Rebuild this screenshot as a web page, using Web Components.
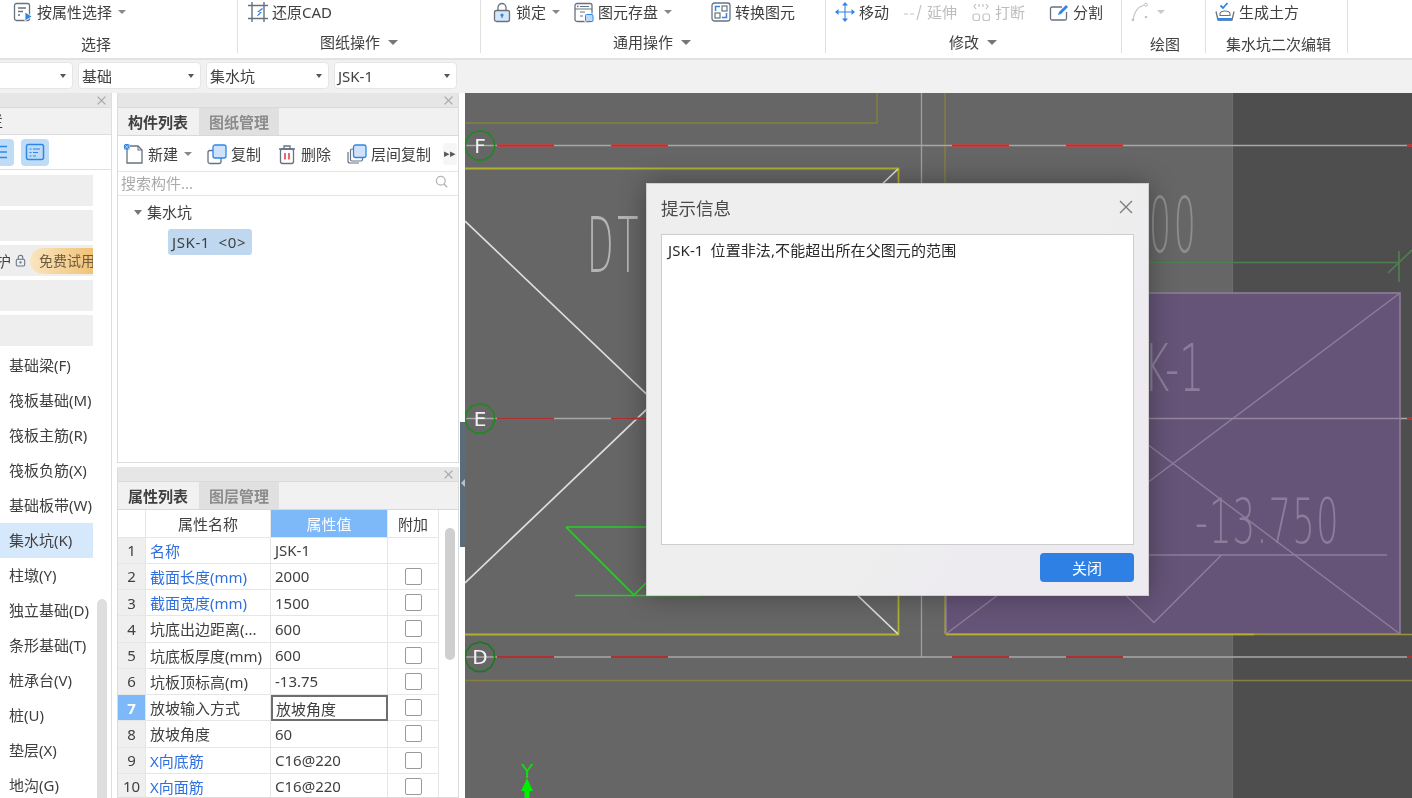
<!DOCTYPE html>
<html lang="zh-CN">
<head>
<meta charset="utf-8">
<title>集水坑</title>
<style>
    html, body { margin: 0; height: 100%; overflow: hidden; background: #fff; }
    body { font: 15px "Noto Sans", "Noto Sans CJK SC", sans-serif; color: #404040; }
</style>
</head>
<body>
<gcl-app>
    <gcl-ribbon slot="ribbon">
        <gcl-group label="选择" style="--w:238px;--pad:13px;--lx:81px">
            <gcl-tool icon="attr" arrow>按属性选择</gcl-tool>
        </gcl-group>
        <gcl-group label="图纸操作" arrow style="--w:243px;--pad:10px;--lx:82px">
            <gcl-tool icon="cad">还原CAD</gcl-tool>
        </gcl-group>
        <gcl-group label="通用操作" arrow style="--w:345px;--pad:11px;--lx:132px">
            <gcl-tool icon="lock" arrow>锁定</gcl-tool>
            <gcl-tool icon="save" arrow style="margin-left:14px">图元存盘</gcl-tool>
            <gcl-tool icon="convert" style="margin-left:39px">转换图元</gcl-tool>
        </gcl-group>
        <gcl-group label="修改" arrow style="--w:296px;--pad:9px;--lx:123px">
            <gcl-tool icon="move">移动</gcl-tool>
            <gcl-tool icon="extend" off style="margin-left:14px">延伸</gcl-tool>
            <gcl-tool icon="break" off style="margin-left:14px">打断</gcl-tool>
            <gcl-tool icon="split" style="margin-left:24px">分割</gcl-tool>
        </gcl-group>
        <gcl-group label="绘图" style="--w:84px;--pad:9px;--lx:28px">
            <gcl-tool icon="arc" arrow off></gcl-tool>
        </gcl-group>
        <gcl-group label="集水坑二次编辑" style="--w:142px;--pad:9px;--lx:20px">
            <gcl-tool icon="earth">生成土方</gcl-tool>
        </gcl-group>
    </gcl-ribbon>

    <gcl-combobar slot="combos">
        <gcl-combo></gcl-combo>
        <gcl-combo>基础</gcl-combo>
        <gcl-combo>集水坑</gcl-combo>
        <gcl-combo>JSK-1</gcl-combo>
    </gcl-combobar>

    <gcl-nav slot="nav"></gcl-nav>

    <gcl-stack slot="side">
        <gcl-panel tab1="构件列表" tab2="图纸管理" style="height:370px">
            <gcl-components></gcl-components>
        </gcl-panel>
        <gcl-panel tab1="属性列表" tab2="图层管理" style="flex:1">
            <gcl-props></gcl-props>
        </gcl-panel>
    </gcl-stack>

    <gcl-canvas slot="canvas"></gcl-canvas>

    <gcl-dialog slot="overlay" heading="提示信息" action="关闭">JSK-1 位置非法,不能超出所在父图元的范围</gcl-dialog>
</gcl-app>

<script>
    const G = '#667280';
    const B = '#2e86e8';
    const L = '#c4c4c4';
    const ICONS = {
        attr: `<rect x="1.5" y="1.5" width="15" height="17" rx="2" fill="none" stroke="${G}" stroke-width="1.3"/><path d="M5 6h8M5 9.5h5M5 13h2" stroke="${G}" stroke-width="1.3"/><path d="M12 10l7 4.5-7 4.5z" fill="${B}" stroke="#fff" stroke-width=".8"/>`,
        cad: `<path d="M4 0v20M16 0v20M0 3.5h20M0 16.5h20" stroke="${G}" stroke-width="1.4" fill="none"/><path d="M14 6l-5 4h3l-3 3.5 1 .5 4-4h-3l4-3z" fill="${B}"/>`,
        lock: `<path d="M6 9V5.5a4 4 0 0 1 8 0V9" fill="none" stroke="${G}" stroke-width="1.3"/><rect x="2.5" y="8.5" width="15" height="11" rx="2" fill="#d5e6f9" stroke="${G}" stroke-width="1.3"/><circle cx="10" cy="13" r="1.6" fill="${B}"/><path d="M10 13v3" stroke="${B}" stroke-width="1.3"/>`,
        save: `<rect x="1" y="1.5" width="17" height="18" rx="2" fill="none" stroke="${G}" stroke-width="1.3"/><path d="M1 7h17M6 4.5h9M6 10h5M6 14h3" stroke="${G}" stroke-width="1.1"/><circle cx="3.8" cy="4.3" r=".9" fill="${G}"/><rect x="10.5" y="11.5" width="9" height="8.5" fill="#fff"/><rect x="11.5" y="12.5" width="7.5" height="7" rx="1" fill="#bcd9f8" stroke="${B}"/>`,
        convert: `<rect x="1" y="1" width="18" height="18" rx="2.5" fill="none" stroke="${G}" stroke-width="1.3"/><rect x="11" y="4" width="5" height="5" fill="none" stroke="${G}" stroke-width="1.2"/><rect x="4" y="11" width="5" height="5" fill="none" stroke="${G}" stroke-width="1.2"/><path d="M9 4.5H4.5V9M11 15.5h4.5V11" fill="none" stroke="${B}" stroke-width="1.5"/>`,
        move: `<path d="M10 1v18M1 10h18" stroke="${B}" stroke-width="1.1"/><path d="M10 0l3 3.5H7zM10 20l3-3.5H7zM0 10l3.5-3v6zM20 10l-3.5-3v6z" fill="${B}"/>`,
        extend: `<path d="M1 12h4M7 12h4M18 3l-4 15" stroke="${L}" stroke-width="1.2" fill="none"/>`,
        break: `<rect x="2" y="12" width="6.5" height="6.5" rx="2" fill="none" stroke="${L}" stroke-width="1.2"/><rect x="12" y="12" width="6.5" height="6.5" rx="2" fill="none" stroke="${L}" stroke-width="1.2"/><path d="M5 2L3 4.5 5 7M15 2l2 2.5L15 7M8 2v3M12 2v3" fill="none" stroke="${L}" stroke-width="1.2"/>`,
        split: `<path d="M13 5H3a1.500 1.500 0 0 0-1.500 1.500v10A1.500 1.500 0 0 0 3 18h13a1.500 1.500 0 0 0 1.500-1.500V10" fill="none" stroke="${G}" stroke-width="1.3"/><path d="M9 13l1-3 7-7 2 2-7 7z" fill="${B}"/>`,
        arc: `<path d="M2 18C3 10 7 5 13 3" fill="none" stroke="${L}" stroke-width="1.3"/><circle cx="15" cy="2.8" r="1.5" fill="none" stroke="${L}"/><circle cx="2" cy="18" r="1.3" fill="${L}"/><circle cx="15" cy="15" r="1.3" fill="${L}"/>`,
        earth: `<path d="M1 9.5l2 8.500h14l2-8.500" fill="none" stroke="${G}" stroke-width="1.3"/><path d="M5 11.5c.5-2 2-2.500 5-2.500s4.500.5 5 2.500v2H5z" fill="none" stroke="${G}" stroke-width="1.1"/><path d="M3 16h14v2.500H3z" fill="${B}"/><path d="M5.5 3.5L8 6l4.500-5" fill="none" stroke="${B}" stroke-width="1.8"/>`,
        add: `<path d="M3 5v14h15V6l-4-4H6" fill="none" stroke="${G}" stroke-width="1.3"/><path d="M14 2v4h4" fill="none" stroke="${G}" stroke-width="1.1"/><rect x="0" y="0" width="5.5" height="5.5" fill="${B}"/><path d="M0 0l5.500 5.500M5.500 0L0 5.500" stroke="#fff" stroke-width=".6"/>`,
        copy: `<rect x="1" y="6.5" width="13" height="13" rx="2" fill="none" stroke="${G}" stroke-width="1.3"/><rect x="6" y="1" width="13" height="13" rx="2" fill="#cfe2fa" stroke="${B}" stroke-width="1.3"/>`,
        trash: `<path d="M2 5h16M7 5V2h6v3" fill="none" stroke="${G}" stroke-width="1.3"/><rect x="3.5" y="5" width="13" height="14.5" rx="2" fill="none" stroke="${G}" stroke-width="1.3"/><path d="M8 9v6.500M12 9v6.500" stroke="#e4393c" stroke-width="1.5"/>`,
        layer: `<path d="M1 8v9a2 2 0 0 0 2 2h9" fill="none" stroke="${G}" stroke-width="1.2"/><rect x="3.5" y="5" width="12" height="12" rx="1.5" fill="#fff" stroke="${G}" stroke-width="1.2"/><rect x="6.5" y="1" width="12.5" height="12.5" rx="2" fill="#cfe2fa" stroke="${B}" stroke-width="1.3"/>`,
        search: `<circle cx="8.5" cy="8.5" r="5.5" fill="none" stroke="#b5b5b5" stroke-width="1.6"/><path d="M12.5 12.500l4 4" stroke="#b5b5b5" stroke-width="1.8"/>`,
        padlock: `<path d="M6.5 8V5.500a3.500 3.500 0 0 1 7 0V8" fill="none" stroke="${G}" stroke-width="1.6"/><rect x="3.5" y="8" width="13" height="10.5" rx="2" fill="none" stroke="${G}" stroke-width="1.6"/><circle cx="10" cy="13" r="1.7" fill="${G}"/>`,
        rows: `<path d="M-3 4.500h20M-3 10h20M-3 15.500h20" stroke="${B}" stroke-width="1.5"/>`,
        form: `<rect x="1.5" y="2.5" width="17" height="15" rx="2" fill="none" stroke="${B}" stroke-width="1.5"/><path d="M4.500 7h2M8 7h7M4.500 10.500h2M8 10.500h5M4.500 14h2M8 14h3" stroke="${B}" stroke-width="1.2"/>`,
        close: `<path d="M4 4l12 12M16 4L4 16" stroke="#a8a8a8" stroke-width="2"/>`
    };

    class GclIcon extends HTMLElement {
        connectedCallback() {
            const size = this.getAttribute('size') || 20;
            this.attachShadow({ mode: 'open' });
            this.shadowRoot.innerHTML = `
                <style>
                    :host { display: inline-flex; flex: none; }
                    svg { display: block; overflow: visible; }
                </style>
                <svg width="${size}" height="${size}" viewBox="0 0 20 20">${ICONS[this.getAttribute('name')] || ''}</svg>`;
        }
    }

    class GclApp extends HTMLElement {
        connectedCallback() {
            this.attachShadow({ mode: 'open' });
            this.shadowRoot.innerHTML = `
                <style>
                    :host {
                        display: grid;
                        position: relative;
                        width: 1412px;
                        height: 798px;
                        overflow: hidden;
                        background: #fff;
                        grid-template-columns: 112px 348px 1fr;
                        grid-template-rows: 60px 33px 1fr;
                        filter: blur(.35px);
                    }
                    ::slotted([slot="ribbon"]), ::slotted([slot="combos"]) { grid-column: 1 / -1; }
                    .grip {
                        position: absolute;
                        left: 460px;
                        top: 422px;
                        width: 5px;
                        height: 125px;
                        background: #5c6b78;
                    }
                    .grip::after {
                        content: '';
                        position: absolute;
                        left: 1px;
                        top: 57px;
                        border: 4px solid transparent;
                        border-left: 0;
                        border-right: 4px solid #b9c2ca;
                    }
                </style>
                <slot name="ribbon"></slot>
                <slot name="combos"></slot>
                <slot name="nav"></slot>
                <slot name="side"></slot>
                <slot name="canvas"></slot>
                <div class="grip"></div>
                <slot name="overlay"></slot>`;
        }
    }

    class GclRibbon extends HTMLElement {
        connectedCallback() {
            this.attachShadow({ mode: 'open' });
            this.shadowRoot.innerHTML = `
                <style>
                    :host {
                        display: flex;
                        height: 60px;
                        box-sizing: border-box;
                        background: #fff;
                        border-bottom: 2px solid #e2e2e2;
                    }
                </style>
                <slot></slot>`;
        }
    }

    class GclGroup extends HTMLElement {
        connectedCallback() {
            const arrow = this.hasAttribute('arrow');
            this.attachShadow({ mode: 'open' });
            this.shadowRoot.innerHTML = `
                <style>
                    :host {
                        display: block;
                        flex: none;
                        box-sizing: border-box;
                        width: var(--w);
                        height: 53px;
                        border-right: 1px solid #e0e0e0;
                    }
                    .tools {
                        display: flex;
                        align-items: center;
                        height: 24px;
                        padding-left: var(--pad);
                    }
                    .label {
                        display: flex;
                        align-items: center;
                        margin-left: var(--lx);
                        margin-top: ${arrow ? 8 : 10}px;
                        height: 20px;
                        line-height: 20px;
                        white-space: nowrap;
                    }
                    .arrow {
                        margin-left: 8px;
                        border: 5px solid transparent;
                        border-top: 5px solid #777;
                        border-bottom: 0;
                    }
                </style>
                <div class="tools"><slot></slot></div>
                <div class="label">${this.getAttribute('label')}${arrow ? '<span class="arrow"></span>' : ''}</div>`;
        }
    }

    class GclTool extends HTMLElement {
        connectedCallback() {
            const arrow = this.hasAttribute('arrow');
            this.attachShadow({ mode: 'open' });
            this.shadowRoot.innerHTML = `
                <style>
                    :host {
                        display: inline-flex;
                        flex: none;
                        align-items: center;
                        white-space: nowrap;
                        line-height: 20px;
                        color: ${this.hasAttribute('off') ? '#bdbdbd' : '#404040'};
                    }
                    span { margin-left: 4px; }
                    i {
                        display: block;
                        margin-left: 6px;
                        border: 4px solid transparent;
                        border-top: 4px solid ${this.hasAttribute('off') ? '#c8c8c8' : '#888'};
                        border-bottom: 0;
                    }
                </style>
                <gcl-icon name="${this.getAttribute('icon')}"></gcl-icon>
                <span><slot></slot></span>
                ${arrow ? '<i></i>' : ''}`;
            if (!this.textContent.trim()) this.shadowRoot.querySelector('span').remove();
        }
    }

    class GclCombobar extends HTMLElement {
        connectedCallback() {
            this.attachShadow({ mode: 'open' });
            this.shadowRoot.innerHTML = `
                <style>
                    :host {
                        display: flex;
                        gap: 5px;
                        height: 33px;
                        box-sizing: border-box;
                        padding: 2px 0 0;
                        margin-left: -50px;
                        background: #f1f1f1;
                    }
                </style>
                <slot></slot>`;
        }
    }

    class GclCombo extends HTMLElement {
        connectedCallback() {
            this.attachShadow({ mode: 'open' });
            this.shadowRoot.innerHTML = `
                <style>
                    :host {
                        display: flex;
                        align-items: center;
                        justify-content: space-between;
                        width: 123px;
                        height: 27px;
                        box-sizing: border-box;
                        padding: 0 6px 0 3px;
                        background: #fff;
                        border: 1px solid #e6e6e6;
                        border-radius: 4px;
                    }
                    i {
                        border: 3.5px solid transparent;
                        border-top: 4px solid #555;
                        border-bottom: 0;
                    }
                </style>
                <span><slot></slot></span><i></i>`;
        }
    }

    class GclNav extends HTMLElement {
        connectedCallback() {
            const items = ['基础梁(F)', '筏板基础(M)', '筏板主筋(R)', '筏板负筋(X)', '基础板带(W)', '集水坑(K)', '柱墩(Y)', '独立基础(D)', '条形基础(T)', '桩承台(V)', '桩(U)', '垫层(X)', '地沟(G)'];
            this.attachShadow({ mode: 'open' });
            this.shadowRoot.innerHTML = `
                <style>
                    :host {
                        display: block;
                        position: relative;
                        overflow: hidden;
                        box-sizing: border-box;
                        height: 705px;
                        background: #fff;
                        border-right: 1px solid #dedede;
                    }
                    .strip {
                        height: 14px;
                        background: #e6e6e6;
                        border-bottom: 1px solid #dadada;
                        display: flex;
                        justify-content: flex-end;
                        align-items: center;
                        padding-right: 3px;
                    }
                    .title {
                        height: 26px;
                        line-height: 26px;
                        margin-left: -12px;
                        background: #f1f1f1;
                        border-bottom: 1px solid #dedede;
                    }
                    .tools {
                        display: flex;
                        gap: 7px;
                        align-items: center;
                        height: 34px;
                        margin-left: -14px;
                        border-bottom: 1px solid #e0e0e0;
                    }
                    .tools b {
                        display: flex;
                        align-items: center;
                        justify-content: center;
                        width: 28px;
                        height: 27px;
                        background: #bfdcf7;
                        border-radius: 4px;
                    }
                    .cards {
                        display: flex;
                        flex-direction: column;
                        gap: 4px;
                        width: 93px;
                        margin-top: 5px;
                    }
                    .cards div {
                        display: flex;
                        align-items: center;
                        height: 31px;
                        background: #eeeeee;
                        overflow: hidden;
                        white-space: nowrap;
                    }
                    .cards em {
                        font-style: normal;
                        margin-left: -4px;
                        width: 18px;
                        flex: none;
                    }
                    .pill {
                        flex: none;
                        margin-left: 3px;
                        width: 78px;
                        height: 26px;
                        line-height: 26px;
                        padding-left: 9px;
                        border-radius: 13px;
                        background: linear-gradient(90deg, #f9e5c0, #efba64);
                        color: #6e5a3c;
                        font-size: 14px;
                        box-sizing: border-box;
                    }
                    ul {
                        list-style: none;
                        margin: 2px 0 0;
                        padding: 0;
                        width: 93px;
                    }
                    li {
                        height: 35px;
                        line-height: 35px;
                        padding-left: 9px;
                        white-space: nowrap;
                    }
                    li.on { background: #d6e9fc; }
                    .thumb {
                        position: absolute;
                        left: 97px;
                        top: 506px;
                        width: 10px;
                        height: 210px;
                        background: #dedede;
                        border-radius: 5px;
                    }
                </style>
                <div class="strip"><gcl-icon name="close" size="13"></gcl-icon></div>
                <div class="title">栏</div>
                <div class="tools">
                    <b><gcl-icon name="rows"></gcl-icon></b>
                    <b><gcl-icon name="form"></gcl-icon></b>
                </div>
                <div class="cards">
                    <div></div>
                    <div></div>
                    <div><em>护</em><gcl-icon name="padlock" size="13"></gcl-icon><span class="pill">免费试用</span></div>
                    <div></div>
                    <div></div>
                </div>
                <ul>${items.map(t => `<li class="${t === '集水坑(K)' ? 'on' : ''}">${t}</li>`).join('')}</ul>
                <div class="thumb"></div>`;
        }
    }

    class GclStack extends HTMLElement {
        connectedCallback() {
            this.attachShadow({ mode: 'open' });
            this.shadowRoot.innerHTML = `
                <style>
                    :host {
                        display: flex;
                        flex-direction: column;
                        gap: 4px;
                        height: 705px;
                        box-sizing: border-box;
                        padding: 0 1px 0 5px;
                        background: #fff;
                    }
                </style>
                <slot></slot>`;
        }
    }

    class GclPanel extends HTMLElement {
        connectedCallback() {
            this.attachShadow({ mode: 'open' });
            this.shadowRoot.innerHTML = `
                <style>
                    :host {
                        display: flex;
                        flex-direction: column;
                        min-height: 0;
                        overflow: hidden;
                        box-sizing: border-box;
                        border: 1px solid #dcdcdc;
                        border-top: 0;
                        background: #fff;
                    }
                    .strip {
                        flex: none;
                        height: 14px;
                        background: #e6e6e6;
                        border-bottom: 1px solid #dadada;
                        display: flex;
                        justify-content: flex-end;
                        align-items: center;
                        padding-right: 3px;
                    }
                    .tabs {
                        flex: none;
                        display: flex;
                        height: 27px;
                        background: #f1f1f1;
                        border-bottom: 1px solid #d8d8d8;
                    }
                    .tabs span {
                        display: flex;
                        align-items: center;
                        justify-content: center;
                        width: 80px;
                        font-weight: 700;
                        color: #404040;
                    }
                    .tabs span + span {
                        margin-left: 1px;
                        background: #e0e0e0;
                        color: #8c8c8c;
                    }
                    .body { flex: 1; min-height: 0; display: flex; flex-direction: column; }
                </style>
                <div class="strip"><gcl-icon name="close" size="13"></gcl-icon></div>
                <div class="tabs"><span>${this.getAttribute('tab1')}</span><span>${this.getAttribute('tab2')}</span></div>
                <div class="body"><slot></slot></div>`;
        }
    }

    class GclComponents extends HTMLElement {
        connectedCallback() {
            this.attachShadow({ mode: 'open' });
            this.shadowRoot.innerHTML = `
                <style>
                    :host { display: flex; flex-direction: column; flex: 1; min-height: 0; }
                    .tools {
                        display: flex;
                        align-items: center;
                        height: 35px;
                        flex: none;
                        padding-left: 6px;
                        border-bottom: 1px solid #e4e4e4;
                    }
                    .more {
                        margin-left: 12px;
                        width: 14px;
                        height: 22px;
                        line-height: 20px;
                        text-align: center;
                        font-size: 11px;
                        color: #555;
                        background: #f6f6f6;
                        border-radius: 3px;
                    }
                    .search {
                        display: flex;
                        align-items: center;
                        justify-content: space-between;
                        flex: none;
                        box-sizing: border-box;
                        height: 24px;
                        padding: 0 8px 3px 3px;
                        color: #ababab;
                        border-bottom: 1px solid #e4e4e4;
                    }
                    .tree { padding: 6px 0 0 16px; }
                    .node { display: flex; align-items: center; height: 20px; line-height: 20px; }
                    .node i {
                        margin-right: 5px;
                        border: 4px solid transparent;
                        border-top: 5px solid #777;
                        border-bottom: 0;
                    }
                    .leaf {
                        display: inline-block;
                        margin: 7px 0 0 34px;
                        height: 26px;
                        line-height: 26px;
                        padding: 0 6px 0 4px;
                        background: #bfd8f0;
                        border-radius: 3px;
                        letter-spacing: .6px;
                        word-spacing: 4px;
                    }
                </style>
                <div class="tools">
                    <gcl-tool icon="add" arrow>新建</gcl-tool>
                    <gcl-tool icon="copy" style="margin-left:15px">复制</gcl-tool>
                    <gcl-tool icon="trash" style="margin-left:16px">删除</gcl-tool>
                    <gcl-tool icon="layer" style="margin-left:16px">层间复制</gcl-tool>
                    <span class="more">▸▸</span>
                </div>
                <div class="search">搜索构件...<gcl-icon name="search" size="16"></gcl-icon></div>
                <div class="tree">
                    <div class="node"><i></i>集水坑</div>
                    <div class="leaf">JSK-1 &lt;0&gt;</div>
                </div>`;
        }
    }

    class GclProps extends HTMLElement {
        connectedCallback() {
            // [名称, 值, 蓝色名称, 带复选框]
            const rows = [
                ['名称', 'JSK-1', true, false],
                ['截面长度(mm)', '2000', true, true],
                ['截面宽度(mm)', '1500', true, true],
                ['坑底出边距离(...', '600', false, true],
                ['坑底板厚度(mm)', '600', false, true],
                ['坑板顶标高(m)', '-13.75', false, true],
                ['放坡输入方式', '放坡角度', false, true],
                ['放坡角度', '60', false, true],
                ['X向底筋', 'C16@220', true, true],
                ['X向面筋', 'C16@220', true, true]
            ];
            const cells = rows.map((r, i) => `
                <div class="no ${i === 6 ? 'cur' : ''}">${i + 1}</div>
                <div class="name ${r[2] ? 'link' : ''}">${r[0]}</div>
                <div class="val ${i === 6 ? 'edit' : ''}">${r[1]}</div>
                <div class="chk">${r[3] ? '<b></b>' : ''}</div>`).join('');
            this.attachShadow({ mode: 'open' });
            this.shadowRoot.innerHTML = `
                <style>
                    :host { display: block; position: relative; flex: 1; min-height: 0; overflow: hidden; }
                    .grid {
                        display: grid;
                        width: 321px;
                        grid-template-columns: 28px 125px 117px 51px;
                        grid-template-rows: 27.5px;
                        grid-auto-rows: 26.25px;
                    }
                    .grid > div {
                        box-sizing: border-box;
                        display: flex;
                        align-items: center;
                        white-space: nowrap;
                        overflow: hidden;
                        border-right: 1px solid #e6e6e6;
                        border-bottom: 1px solid #e6e6e6;
                    }
                    .h { justify-content: center; }
                    .h.val { background: #7db8f8; color: #fff; padding: 0; }
                    .no { justify-content: center; background: #efefef; }
                    .no.cur { background: #7db8f8; color: #fff; font-weight: 700; }
                    .name { padding-left: 4px; }
                    .link { color: #2f6fe0; }
                    .val { padding-left: 4px; }
                    .grid > .edit { border: 2px solid #6e6e6e; padding-left: 3px; }
                    .chk { justify-content: center; }
                    .chk b {
                        width: 15px;
                        height: 15px;
                        border: 1px solid #9a9a9a;
                        border-radius: 2px;
                    }
                    .thumb {
                        position: absolute;
                        left: 327px;
                        top: 18px;
                        width: 10px;
                        height: 132px;
                        background: #cfcfcf;
                        border-radius: 5px;
                    }
                </style>
                <div class="grid">
                    <div class="h"></div>
                    <div class="h">属性名称</div>
                    <div class="h val">属性值</div>
                    <div class="h">附加</div>
                    ${cells}
                </div>
                <div class="thumb"></div>`;
        }
    }

    class GclCanvas extends HTMLElement {
        connectedCallback() {
            const axis = (y, red, letter, ring) => {
                const pts = [];
                for (let i = 0; i < 11; i++) {
                    const a = -Math.PI / 2 + i * 2 * Math.PI / 11;
                    pts.push((480 + 15 * Math.cos(a)).toFixed(1) + ',' + (y + 15 * Math.sin(a)).toFixed(1));
                }
                const segs = [[497, 554], [611, 668], [952, 1009], [1066, 1123], [1407, 1412]];
                return `
                    <line x1="465" y1="${y}" x2="1412" y2="${y}" stroke="#a8a8a8" stroke-width="1.6"/>
                    ${segs.map(s => `<line x1="${s[0]}" y1="${y}" x2="${s[1]}" y2="${y}" stroke="${red}" stroke-width="2"/>`).join('')}
                    <polygon points="${pts.join(' ')}" fill="none" stroke="${ring}" stroke-width="1.6"/>
                    <text x="480" y="${y + 7}" text-anchor="middle" font-size="20" fill="#f2f2f2">${letter}</text>`;
            };
            this.attachShadow({ mode: 'open' });
            this.shadowRoot.innerHTML = `
                <style>
                    :host { display: block; height: 705px; overflow: hidden; background: #666; margin-left: 5px; }
                    svg { display: block; }
                    text { font-family: "DejaVu Sans", sans-serif; }
                    .cad { font-weight: 200; }
                </style>
                <svg width="947" height="705" viewBox="465 93 947 705">
                    <rect x="1233" y="93" width="179" height="705" fill="#4e4e4e"/>
                    <line x1="1232.5" y1="93" x2="1232.5" y2="798" stroke="#6e6e6e"/>

                    <path d="M465 123h412V93M945 93v90" fill="none" stroke="#84823e" stroke-width="1.4"/>
                    <line x1="921.5" y1="93" x2="921.5" y2="657" stroke="#a0a0a0" stroke-width="1.3"/>
                    <path d="M465 168.500H898.500V634.500H465" fill="none" stroke="#b0b030" stroke-width="1.8"/>
                    <line x1="465" y1="680.5" x2="1412" y2="680.5" stroke="#84823e" stroke-width="1.4"/>
                    <path d="M465 221L898 634M465 583L898 169" stroke="#dedede" stroke-width="1.7" fill="none"/>

                    <g transform="translate(587 272) scale(.45 1)" class="cad"><text font-size="77" fill="#b4b4b4" letter-spacing="8">DT</text></g>
                    <g transform="translate(1149 252) scale(.45 1)" class="cad"><text font-size="77" fill="#8e8e8e" letter-spacing="6">00</text></g>

                    <path d="M566 527h80M566 527l68 68 12-12M575 595.500h126" fill="none" stroke="#26d026" stroke-width="1.7"/>

                    ${axis(145.5, '#f41818', 'F', '#1c8a1c')}
                    ${axis(657, '#b03030', 'D', '#1a7a1a')}
                    ${axis(418.5, '#b03030', 'E', '#1c8a1c')}

                    <path d="M1148 262.500h252M1399 251v31M1388 273l24-23" stroke="#4f7f4f" stroke-width="1.7" fill="none"/>

                    <rect x="946" y="293" width="454" height="341" fill="#665478" stroke="#8c7e9a" stroke-width="1.6"/>
                    <path d="M946 634L1400 293M946 293L1400 634" stroke="#8c7e9a" stroke-width="1.4" fill="none"/>
                    <line x1="946" y1="418.5" x2="1400" y2="418.5" stroke="#93879d" stroke-width="1.6"/>
                    <path d="M1148 555h239M1221.500 555l-67.500 67.500-28-27" stroke="#8c7e9a" stroke-width="1.5" fill="none"/>
                    <g transform="translate(1204 391) scale(.6 1)" class="cad"><text font-size="65" fill="#8c7e9a" text-anchor="end">K-1</text></g>
                    <g transform="translate(1195 543) scale(.523 .92)" class="cad"><text font-size="68" fill="#8c7e9a" letter-spacing="2">-13.750</text></g>

                    <line x1="945" y1="183" x2="945" y2="634" stroke="#a0a040" stroke-width="1.3"/>
                    <line x1="946" y1="634.5" x2="1412" y2="634.5" stroke="#9a9440" stroke-width="1.5"/>
                    <line x1="946" y1="634.5" x2="1254" y2="634.5" stroke="#b8b030" stroke-width="1.7"/>

                    <text x="527" y="778" text-anchor="middle" font-size="20" fill="#10e010">Y</text>
                    <path d="M527 778l6 13h-3.500v7h-5v-7H521z" fill="#00ee00"/>
                </svg>`;
        }
    }

    class GclDialog extends HTMLElement {
        connectedCallback() {
            this.attachShadow({ mode: 'open' });
            this.shadowRoot.innerHTML = `
                <style>
                    :host {
                        display: flex;
                        flex-direction: column;
                        position: absolute;
                        left: 646px;
                        top: 183px;
                        width: 503px;
                        height: 413px;
                        box-sizing: border-box;
                        padding: 0 14px 13px 14px;
                        background: linear-gradient(125deg, #eeeeee 62%, #edebf0 72%);
                        border: 1px solid #cfcfcf;
                        box-shadow: 0 0 26px rgba(0, 0, 0, .33);
                    }
                    header {
                        flex: none;
                        box-sizing: border-box;
                        display: flex;
                        align-items: center;
                        justify-content: space-between;
                        height: 50px;
                        padding-bottom: 4px;
                        font-size: 17.5px;
                        color: #4a4a4a;
                    }
                    .x { display: block; margin-right: 1px; }
                    .box {
                        flex: 1;
                        padding: 5px 6px;
                        background: #fff;
                        border: 1px solid #cdcdcd;
                        color: #2a2a2a;
                        line-height: 20px;
                        word-spacing: 3px;
                        letter-spacing: .1px;
                    }
                    footer { flex: none; display: flex; justify-content: flex-end; margin-top: 8px; }
                    button {
                        width: 94px;
                        height: 29px;
                        padding: 0;
                        border: 0;
                        border-radius: 4px;
                        background: #2e80e4;
                        color: #fff;
                        font: inherit;
                    }
                </style>
                <header>
                    <span>${this.getAttribute('heading')}</span>
                    <svg class="x" width="14" height="14" viewBox="0 0 14 14"><path d="M1 1l12 12M13 1L1 13" stroke="#7a7a7a" stroke-width="1.3"/></svg>
                </header>
                <div class="box"><slot></slot></div>
                <footer><button>${this.getAttribute('action')}</button></footer>`;
        }
    }

    customElements.define('gcl-icon', GclIcon);
    customElements.define('gcl-tool', GclTool);
    customElements.define('gcl-group', GclGroup);
    customElements.define('gcl-ribbon', GclRibbon);
    customElements.define('gcl-combobar', GclCombobar);
    customElements.define('gcl-combo', GclCombo);
    customElements.define('gcl-nav', GclNav);
    customElements.define('gcl-stack', GclStack);
    customElements.define('gcl-panel', GclPanel);
    customElements.define('gcl-components', GclComponents);
    customElements.define('gcl-props', GclProps);
    customElements.define('gcl-canvas', GclCanvas);
    customElements.define('gcl-dialog', GclDialog);
    customElements.define('gcl-app', GclApp);
</script>
</body>
</html>
